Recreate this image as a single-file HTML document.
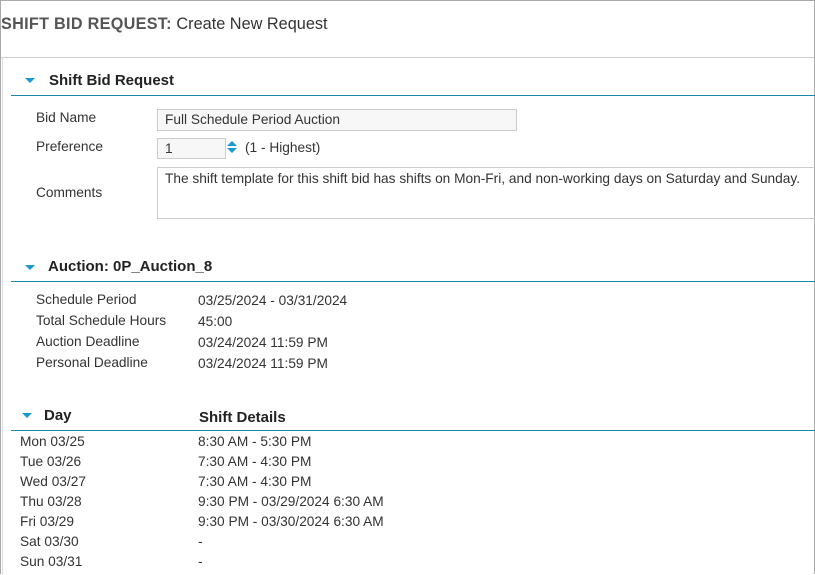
<!DOCTYPE html>
<html><head><style>
body{margin:0;width:815px;height:575px;overflow:hidden;background:#fff;font-family:"Liberation Sans",Arial,sans-serif;color:#333;position:relative}
.a{position:absolute;white-space:nowrap}
.t{font-size:13.7px;color:#333}
.h{font-size:15px;font-weight:bold;color:#222}
.tri{position:absolute;width:0;height:0;border-left:5px solid transparent;border-right:5px solid transparent;border-top:5px solid #1b9ad1}
.ln{position:absolute;height:1px;background:#1a86a8}
</style></head><body>
<div class="a" style="left:0;top:0;width:813px;height:573px;border:1px solid #aaa;border-bottom:none"></div>
<div class="a" style="left:1px;top:57px;width:813px;height:1px;background:#ccc"></div>
<div class="a" style="left:2px;top:57px;width:1px;height:518px;background:#ddd"></div>
<div class="a" style="left:1px;top:15px"><b style="color:#555;font-size:16.2px;letter-spacing:0.3px">SHIFT BID REQUEST:</b><span style="color:#333;font-size:16.3px"> Create New Request</span></div>

<div class="tri" style="left:25px;top:78px"></div>
<div class="a h" style="left:49px;top:72px">Shift Bid Request</div>
<div class="ln" style="left:11px;top:95px;width:804px"></div>
<div class="a t" style="left:36px;top:110px">Bid Name</div>
<div class="a" style="left:157px;top:109px;width:358px;height:20px;border:1px solid #ccc;background:#f7f7f7"></div>
<div class="a t" style="left:165px;top:112px">Full Schedule Period Auction</div>
<div class="a t" style="left:36px;top:139px">Preference</div>
<div class="a" style="left:157px;top:138px;width:67px;height:19px;border:1px solid #ccc;background:#f7f7f7"></div>
<div class="a t" style="left:165px;top:141px">1</div>
<div class="a" style="left:227px;top:141px;width:0;height:0;border-left:5px solid transparent;border-right:5px solid transparent;border-bottom:5px solid #1b9ad1"></div>
<div class="a" style="left:227px;top:148px;width:0;height:0;border-left:5px solid transparent;border-right:5px solid transparent;border-top:5px solid #1b9ad1"></div>
<div class="a t" style="left:245px;top:140px">(1 - Highest)</div>
<div class="a t" style="left:36px;top:185px">Comments</div>
<div class="a" style="left:157px;top:167px;width:660px;height:50px;border:1px solid #ccc;border-right:none"></div>
<div class="a t" style="left:165px;top:171px">The shift template for this shift bid has shifts on Mon-Fri, and non-working days on Saturday and Sunday.</div>

<div class="tri" style="left:25px;top:265px"></div>
<div class="a h" style="left:48px;top:258px">Auction: 0P_Auction_8</div>
<div class="ln" style="left:11px;top:281px;width:804px"></div>
<div class="a t" style="left:36px;top:292px">Schedule Period</div><div class="a t" style="left:198px;top:293px">03/25/2024 - 03/31/2024</div>
<div class="a t" style="left:36px;top:313px">Total Schedule Hours</div><div class="a t" style="left:198px;top:314px">45:00</div>
<div class="a t" style="left:36px;top:334px">Auction Deadline</div><div class="a t" style="left:198px;top:335px">03/24/2024 11:59 PM</div>
<div class="a t" style="left:36px;top:355px">Personal Deadline</div><div class="a t" style="left:198px;top:356px">03/24/2024 11:59 PM</div>

<div class="tri" style="left:22px;top:413px"></div>
<div class="a h" style="left:44px;top:407px">Day</div>
<div class="a h" style="left:199px;top:409px">Shift Details</div>
<div class="ln" style="left:11px;top:430px;width:804px"></div>
<div class="a t" style="left:20px;top:434px">Mon 03/25</div><div class="a t" style="left:198px;top:434px">8:30 AM - 5:30 PM</div>
<div class="a t" style="left:20px;top:454px">Tue 03/26</div><div class="a t" style="left:198px;top:454px">7:30 AM - 4:30 PM</div>
<div class="a t" style="left:20px;top:474px">Wed 03/27</div><div class="a t" style="left:198px;top:474px">7:30 AM - 4:30 PM</div>
<div class="a t" style="left:20px;top:494px">Thu 03/28</div><div class="a t" style="left:198px;top:494px">9:30 PM - 03/29/2024 6:30 AM</div>
<div class="a t" style="left:20px;top:514px">Fri 03/29</div><div class="a t" style="left:198px;top:514px">9:30 PM - 03/30/2024 6:30 AM</div>
<div class="a t" style="left:20px;top:534px">Sat 03/30</div><div class="a t" style="left:198px;top:534px">-</div>
<div class="a t" style="left:20px;top:554px">Sun 03/31</div><div class="a t" style="left:198px;top:554px">-</div>
</body></html>
